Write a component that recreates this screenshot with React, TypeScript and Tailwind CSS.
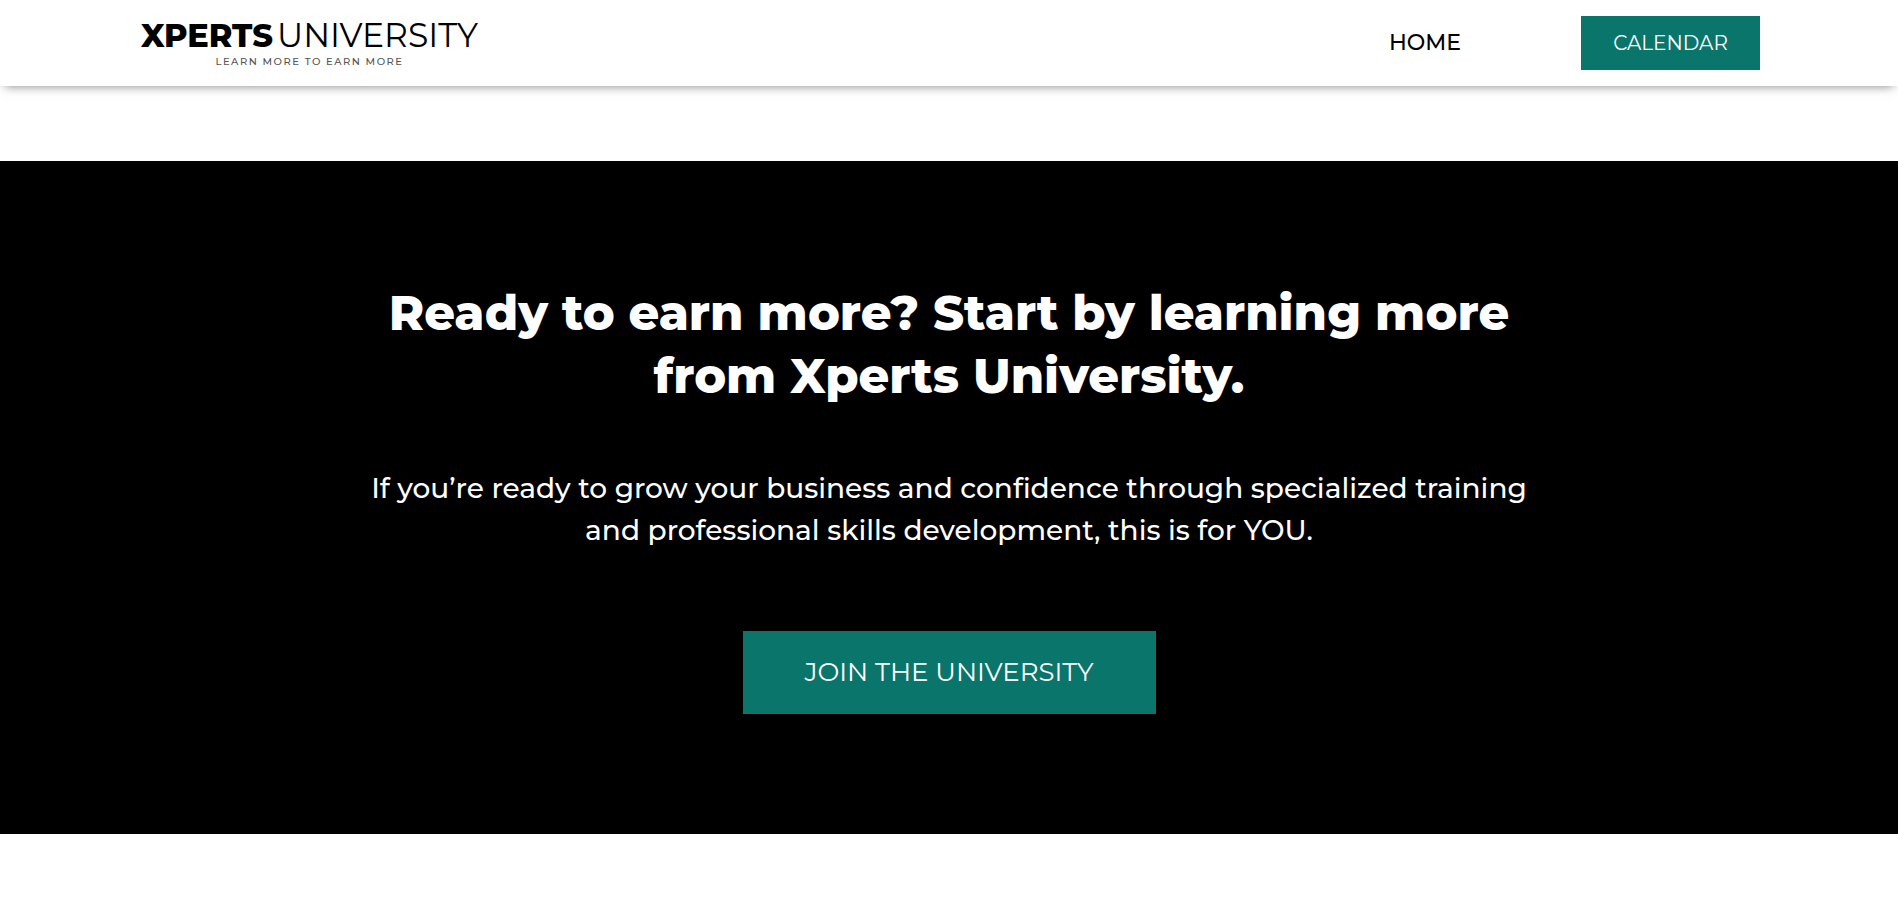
export default function App() {
  return (
    <div className="bg-white font-['Montserrat','Inter',sans-serif] text-black">
      <header className="flex h-[86px] items-center justify-between bg-white pr-[138px] pl-[140px] shadow-[0_5px_10px_-5px_rgba(0,0,0,0.5)]">
        <a href="#home" className="flex w-[339px] flex-col items-center pt-0.5">
          <span className="flex items-baseline gap-1 leading-8 whitespace-nowrap">
            <span className="text-[32px] font-extrabold">XPERTS</span>
            <span className="text-[33px] font-normal">UNIVERSITY</span>
          </span>
          <span className="pt-0.5 text-[10px] leading-4 font-medium tracking-[0.15em] text-[#555555]">LEARN MORE TO EARN MORE</span>
        </a>
        <nav className="flex items-center gap-[120px] pb-px">
          <a href="#home" className="text-[22px] font-medium">HOME</a>
          <a href="#calendar" className="flex h-[54px] w-[179px] items-center justify-center bg-[#0a756b] text-[20px] text-white">CALENDAR</a>
        </nav>
      </header>
      <main className="pt-[75px] pb-[90px]">
        <section className="flex flex-col items-center bg-black pt-[121px] pb-[120px] text-center text-white">
          <h1 className="text-[48px] leading-[63px] font-extrabold">
            Ready to earn more? Start by learning more
            <br />
            from Xperts University.
          </h1>
          <p className="mt-[59px] text-[28px] leading-[42px] font-medium">
            If you’re ready to grow your business and confidence through specialized training
            <br />
            and professional skills development, this is for YOU.
          </p>
          <a href="#join" className="mt-[80px] flex h-[83px] w-[413px] items-center justify-center bg-[#0a756b] text-[26px]">
            JOIN THE UNIVERSITY
          </a>
        </section>
      </main>
    </div>
  );
}
